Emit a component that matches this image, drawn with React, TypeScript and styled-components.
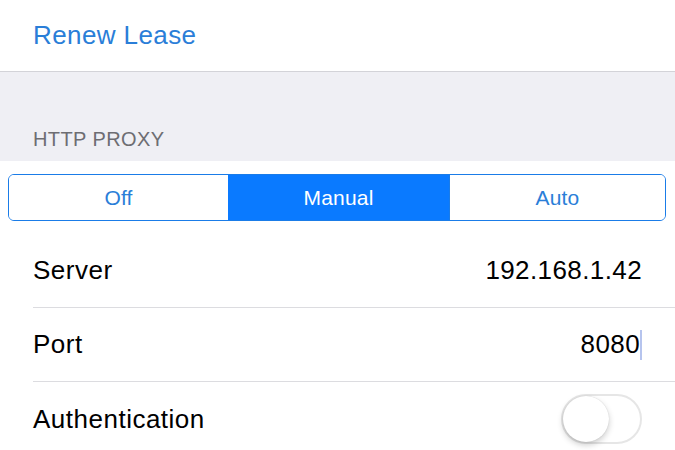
import React, { useState } from "react";
import styled, { createGlobalStyle } from "styled-components";

const Global = createGlobalStyle`
  html, body {
    margin: 0;
    padding: 0;
    background: #ffffff;
    font-family: "Liberation Sans", Arial, sans-serif;
    -webkit-font-smoothing: antialiased;
  }
`;

const Page = styled.div`
  width: 675px;
  height: 450px;
  overflow: hidden;
  background: #ffffff;
`;

const ActionRow = styled.div`
  display: flex;
  align-items: center;
  padding-left: 33px;
  border-bottom: 1px solid #d3d3d8;
  box-sizing: border-box;
  height: 72px;
`;

const ActionText = styled.span`
  color: #2a7ed8;
  font-size: 26px;
  letter-spacing: 0.4px;
`;

const SectionHeader = styled.div`
  height: 89px;
  background: #efeff4;
  display: flex;
  align-items: flex-end;
  padding: 0 0 10px 33px;
  box-sizing: border-box;
  color: #6d6d72;
  font-size: 20px;
  letter-spacing: 0.4px;
`;

const SegmentWrap = styled.div`
  padding: 13px 9px 13px 8px;
`;

const Segmented = styled.div`
  display: grid;
  grid-template-columns: 219px 221px 1fr;
  height: 47px;
  border: 1.5px solid #1a7ce8;
  border-radius: 6px;
  overflow: hidden;
  box-sizing: border-box;
`;

const Segment = styled.button<{ active: boolean }>`
  border: none;
  border-left: ${({ active }) => (active ? "none" : "1px solid #1a7ce8")};
  &:first-child {
    border-left: none;
  }
  background: ${({ active }) => (active ? "#0a7aff" : "#ffffff")};
  color: ${({ active }) => (active ? "#ffffff" : "#2a7ed8")};
  font-family: "Liberation Sans", Arial, sans-serif;
  font-size: 21px;
  letter-spacing: 0.2px;
  padding: 0;
  cursor: pointer;
`;

const Row = styled.div<{ last?: boolean }>`
  margin-left: 33px;
  padding-right: 33px;
  height: 74px;
  display: flex;
  align-items: center;
  justify-content: space-between;
  border-bottom: ${({ last }) => (last ? "none" : "1px solid #dcdce0")};
  box-sizing: border-box;
`;

const Label = styled.span`
  color: #000000;
  font-size: 26px;
  letter-spacing: 0.5px;
`;

const Value = styled.span`
  color: #000000;
  font-size: 26px;
  letter-spacing: 0.4px;
  display: flex;
  align-items: center;
`;

const Caret = styled.span`
  display: inline-block;
  width: 2px;
  height: 30px;
  background: #b6c4ee;
`;

const Toggle = styled.div<{ on: boolean }>`
  width: 81px;
  height: 50px;
  border-radius: 25px;
  border: 2px solid #e6e6e6;
  box-sizing: border-box;
  background: ${({ on }) => (on ? "#4cd964" : "#ffffff")};
  position: relative;
  cursor: pointer;
`;

const Knob = styled.div<{ on: boolean }>`
  position: absolute;
  top: 0;
  left: ${({ on }) => (on ? "31px" : "0")};
  width: 46px;
  height: 46px;
  border-radius: 50%;
  background: #ffffff;
  box-shadow: 0 3px 6px rgba(0, 0, 0, 0.2), 0 0 1px rgba(0, 0, 0, 0.2);
`;

const App: React.FC = () => {
  const [mode, setMode] = useState("Manual");
  const [auth, setAuth] = useState(false);

  return (
    <>
      <Global />
      <Page>
        <ActionRow>
          <ActionText>Renew Lease</ActionText>
        </ActionRow>
        <SectionHeader>HTTP PROXY</SectionHeader>
        <SegmentWrap>
          <Segmented>
            {["Off", "Manual", "Auto"].map((m) => (
              <Segment key={m} active={mode === m} onClick={() => setMode(m)}>
                {m}
              </Segment>
            ))}
          </Segmented>
        </SegmentWrap>
        <Row>
          <Label>Server</Label>
          <Value>192.168.1.42</Value>
        </Row>
        <Row>
          <Label>Port</Label>
          <Value>
            8080
            <Caret />
          </Value>
        </Row>
        <Row last>
          <Label>Authentication</Label>
          <Toggle on={auth} onClick={() => setAuth(!auth)}>
            <Knob on={auth} />
          </Toggle>
        </Row>
      </Page>
    </>
  );
};

export default App;
